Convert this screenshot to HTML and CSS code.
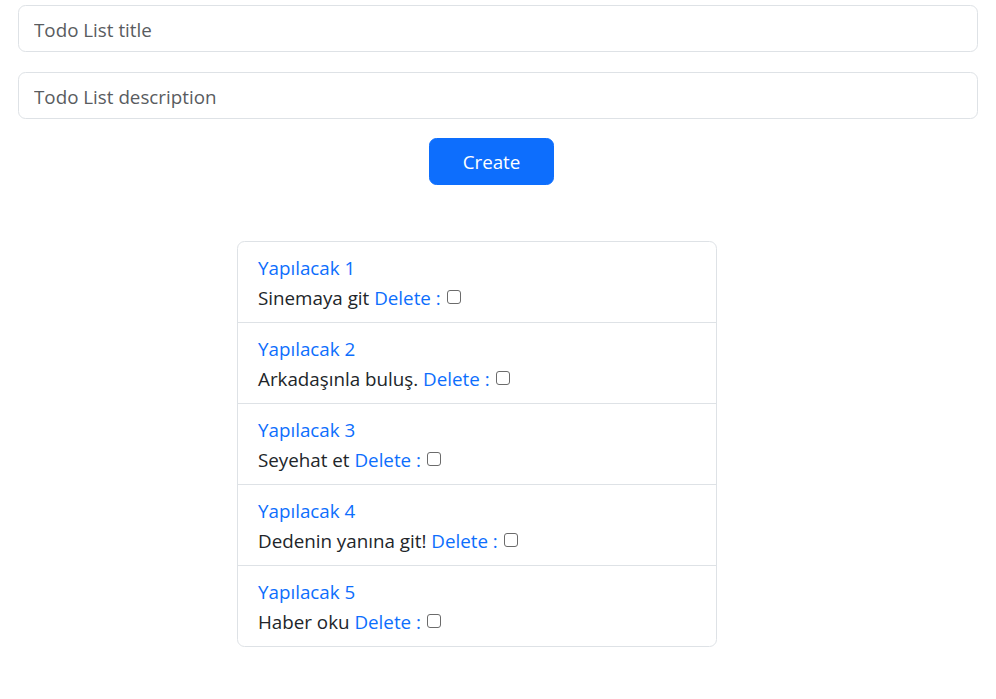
FILE: index.html
```html
<!DOCTYPE html>
<html lang="tr">
<head>
<meta charset="utf-8">
<title>Todo List</title>
<link rel="stylesheet" href="styles.css">
</head>
<body>
<div class="page">
  <input class="field" type="text" placeholder="Todo List title">
  <input class="field" type="text" placeholder="Todo List description">
  <div class="actions"><button class="btn">Create</button></div>
  <ul class="list">
    <li class="item"><a class="title" href="#">Yapılacak 1</a><div class="desc">Sinemaya git <a class="del" href="#">Delete :</a> <input class="check" type="checkbox"></div></li>
    <li class="item"><a class="title" href="#">Yapılacak 2</a><div class="desc">Arkadaşınla buluş. <a class="del" href="#">Delete :</a> <input class="check" type="checkbox"></div></li>
    <li class="item"><a class="title" href="#">Yapılacak 3</a><div class="desc">Seyehat et <a class="del" href="#">Delete :</a> <input class="check" type="checkbox"></div></li>
    <li class="item"><a class="title" href="#">Yapılacak 4</a><div class="desc">Dedenin yanına git! <a class="del" href="#">Delete :</a> <input class="check" type="checkbox"></div></li>
    <li class="item"><a class="title" href="#">Yapılacak 5</a><div class="desc">Haber oku <a class="del" href="#">Delete :</a> <input class="check" type="checkbox"></div></li>
  </ul>
</div>
</body>
</html>
```

FILE: styles.css
```css
* { box-sizing: border-box; }
html, body { margin: 0; padding: 0; background: #fff; }
body {
  font-family: "Open Sans", "Noto Sans", sans-serif;
  font-size: 18.8px;
  line-height: 30px;
  color: #212529;
}
.page {
  padding: 5px 18px 0 18px;
  width: 996px;
}
.field {
  display: block;
  width: 960px;
  height: 47px;
  padding: 2px 15px 0 15px;
  font: inherit;
  color: #212529;
  border: 1px solid #dee2e6;
  border-radius: 7.5px;
  background: #fff;
  margin: 0 0 20px 0;
  outline: none;
}
.field + .field { margin-bottom: 19px; }
.field::placeholder { color: #595c5f; opacity: 1; }
.actions { display: flex; }
.btn {
  margin-left: 411px;
  width: 125px;
  height: 47px;
  padding: 1px 0 0 0;
  font: inherit;
  color: #fff;
  background: #0d6efd;
  border: 1px solid #0d6efd;
  border-radius: 7.5px;
}
.list {
  list-style: none;
  margin: 56px 0 0 219px;
  padding: 0;
  width: 480px;
  border: 1px solid #dee2e6;
  border-radius: 7.5px;
}
.item {
  padding: 11px 20px 9px 20px;
  border-top: 1px solid #dee2e6;
}
.item:first-child { border-top: 0; }
.title, .del { color: #0d6efd; text-decoration: none; }
.title { display: block; }
.desc { display: block; }
.check {
  -webkit-appearance: none;
  appearance: none;
  width: 14px;
  height: 14px;
  margin: 0 0 0 1px;
  border: 1.3px solid #6b6b6b;
  border-radius: 3px;
  background: #fff;
  vertical-align: 1px;
}
```
